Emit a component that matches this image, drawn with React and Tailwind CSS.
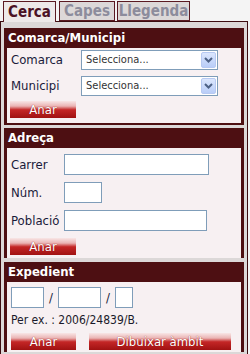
import React from "react";

const font = { fontFamily: '"DejaVu Sans Condensed", "DejaVu Sans", sans-serif' };

const Button = ({ label, className }) => (
  <div
    className={`h-[17px] flex items-center justify-center text-[13px] text-white bg-[linear-gradient(to_bottom,#f8e6e6_0%,#eab4b4_30%,#c42626_52%,#a01212_100%)] [text-shadow:0_0_1px_#700] ${className}`}
  >
    {label}
  </div>
);

const Select = () => (
  <div className="w-[137px] h-[20px] border border-[#7f9db9] bg-white flex items-center justify-between pl-[4px] pr-[1px]">
    <span className="text-[11px] text-[#333]">Selecciona...</span>
    <div className="w-[15px] h-[16px] rounded-[2px] border border-[#b7c9f2] bg-[linear-gradient(to_bottom,#dbe6fd,#b9cdf8)] flex items-center justify-center">
      <svg width="9" height="6" viewBox="0 0 9 6">
        <path d="M1 1 L4.5 4.5 L8 1" stroke="#4d6185" strokeWidth="2" fill="none" />
      </svg>
    </div>
  </div>
);

const Input = ({ w }) => (
  <div className={`h-[21px] border border-[#7f9db9] bg-white ${w}`} />
);

const Section = ({ title, children, className }) => (
  <div className={`bg-[#4d0f12] p-[3px] pt-[1px] ${className}`}>
    <div className="text-white font-bold text-[13px] leading-[18px] px-[1px] pb-[1px]">{title}</div>
    <div className="bg-[#f7f0f2]">{children}</div>
  </div>
);

const Tab = ({ label, active, w }) => (
  <div
    className={`border border-[#5b1a22] flex items-center justify-center text-[15px] font-bold ${w} ${
      active ? "bg-[#ede9e9] text-[#4a1225] border-b-0 h-[21px] z-10" : "bg-[#dcd8d8] text-[#8c8c9c] h-[20px]"
    }`}
  >
    {label}
  </div>
);

export default function App() {
  return (
    <div className="w-[250px] h-[354px] bg-[#f4f4f4] pt-[1px]" style={font}>
      <div className="flex pl-[3px] items-start relative -mb-[1px]">
        <Tab label="Cerca" active w="w-[53px]" />
        <div className="w-[3px]" />
        <Tab label="Capes" w="w-[56px]" />
        <div className="w-[2px]" />
        <Tab label="Llegenda" w="w-[73px]" />
      </div>
      <div className="w-[248px] h-[333px] border border-b-0 border-[#3c0c10] bg-[#dcd8d8] px-[3px] pt-[6px]">
        <Section title="Comarca/Municipi" className="h-[97px]">
          <div className="pt-[2px] pb-[5px] pl-[4px]">
            <div className="flex items-center h-[20px]">
              <span className="w-[70px] text-[13px] text-[#1a1a3a]">Comarca</span>
              <Select />
            </div>
            <div className="flex items-center h-[20px] mt-[6px]">
              <span className="w-[70px] text-[13px] text-[#1a1a3a]">Municipi</span>
              <Select />
            </div>
            <Button label="Anar" className="w-[66px] mt-[5px] -ml-[1px]" />
          </div>
        </Section>
        <Section title="Adreça" className="mt-[3px] h-[130px]">
          <div className="pt-[6px] pl-[4px] pb-[3px]">
            <div className="flex items-center">
              <span className="w-[53px] text-[13px] text-[#1a1a3a]">Carrer</span>
              <Input w="w-[145px]" />
            </div>
            <div className="flex items-center mt-[7px]">
              <span className="w-[53px] text-[13px] text-[#1a1a3a]">Núm.</span>
              <Input w="w-[38px]" />
            </div>
            <div className="flex items-center mt-[7px]">
              <span className="w-[53px] text-[13px] text-[#1a1a3a]">Població</span>
              <Input w="w-[143px]" />
            </div>
            <Button label="Anar" className="w-[66px] mt-[7px] -ml-[1px]" />
          </div>
        </Section>
        <Section title="Expedient" className="mt-[4px] h-[90px]">
          <div className="pt-[5px] pl-[4px] pb-[2px]">
            <div className="flex items-center text-[13px] text-[#1a1a3a]">
              <Input w="w-[33px]" />
              <span className="w-[14px] text-center">/</span>
              <Input w="w-[43px]" />
              <span className="w-[14px] text-center">/</span>
              <Input w="w-[18px]" />
            </div>
            <div className="text-[12px] text-[#1a1a2a] mt-[5px] leading-[14px]">Per ex. : 2006/24839/B.</div>
            <div className="flex mt-[6px]">
              <Button label="Anar" className="w-[65px]" />
              <Button label="Dibuixar àmbit" className="w-[142px] ml-[13px]" />
            </div>
          </div>
        </Section>
      </div>
    </div>
  );
}
